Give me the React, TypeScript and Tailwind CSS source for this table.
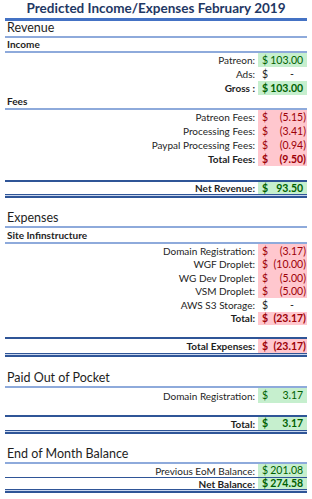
import React from 'react';

type Kind = 'pos' | 'neg' | 'none';

const font = { fontFamily: 'Lato, "Open Sans", Arial, sans-serif' };

function LightLine() {
  return <div className="h-[2px] bg-[#8eaadb]" />;
}

function DarkLine() {
  return <div className="h-[2px] bg-[#2f5597]" />;
}

function DoubleLine() {
  return <div className="h-[4px] border-t border-b-2 border-[#2f5597] bg-[#c9d6ee]" />;
}

function Heading({ text, h }: { text: string; h: string }) {
  return (
    <div className={`${h} flex items-end pl-[2px] text-[12.5px] leading-none text-[#1e1e1e] pb-[2px]`}>
      {text}
    </div>
  );
}

function SubHeading({ text, h }: { text: string; h: string }) {
  return (
    <div className={`${h} flex items-end pl-[2px] text-[10px] font-bold leading-none text-[#1e1e1e] pb-[2px]`}>
      {text}
    </div>
  );
}

function Row({
  label,
  value,
  kind,
  bold,
  h,
}: {
  label: string;
  value: string;
  kind: Kind;
  bold?: boolean;
  h: string;
}) {
  const cell =
    kind === 'pos'
      ? 'bg-[#c6efce] text-[#006100]'
      : kind === 'neg'
      ? 'bg-[#ffc7ce] text-[#9c0006]'
      : 'text-[#1e1e1e]';
  const neg = value.startsWith('(');
  return (
    <div className={`${h} flex text-[10px] leading-none ${bold ? 'font-bold' : ''}`}>
      <div className="flex-1 flex items-center justify-end pr-[3px] text-[#1e1e1e]">{label}</div>
      <div className={`w-[49px] flex items-center justify-between pl-[4px] pr-[1px] text-[10.5px] ${cell}`}>
        <span>$</span>
        {value === '-' ? (
          <span className="pr-[12px]">-</span>
        ) : (
          <span>
            {value}
            {!neg && <span className="invisible">)</span>}
          </span>
        )}
      </div>
    </div>
  );
}

export default function App() {
  return (
    <div className="w-[312px] h-[499px] bg-white overflow-hidden" style={font}>
      <div className="px-[5px]">
        <div className="h-[18px] flex items-center justify-center text-[13.5px] font-bold text-[#1f3864] leading-none">
          Predicted Income/Expenses February 2019
        </div>
        <div className="h-[3px] bg-[#4472c4]" />

        <Heading text="Revenue" h="h-[15px]" />
        <LightLine />
        <SubHeading text="Income" h="h-[13px]" />
        <LightLine />
        <Row label="Patreon:" value="103.00" kind="pos" h="h-[14px]" />
        <Row label="Ads:" value="-" kind="none" h="h-[14px]" />
        <Row label="Gross :" value="103.00" kind="pos" bold h="h-[14px]" />
        <SubHeading text="Fees" h="h-[13px]" />
        <LightLine />
        <Row label="Patreon Fees:" value="(5.15)" kind="neg" h="h-[14px]" />
        <Row label="Processing Fees:" value="(3.41)" kind="neg" h="h-[14px]" />
        <Row label="Paypal Processing Fees:" value="(0.94)" kind="neg" h="h-[14px]" />
        <Row label="Total Fees:" value="(9.50)" kind="neg" bold h="h-[14px]" />
        <div className="h-[14px]" />
        <DarkLine />
        <Row label="Net Revenue:" value="93.50" kind="pos" bold h="h-[12px]" />
        <DoubleLine />
        <div className="h-[12px]" />

        <Heading text="Expenses" h="h-[16px]" />
        <LightLine />
        <SubHeading text="Site Infinstructure" h="h-[14px]" />
        <LightLine />
        <Row label="Domain Registration:" value="(3.17)" kind="neg" h="h-[13.5px]" />
        <Row label="WGF Droplet:" value="(10.00)" kind="neg" h="h-[13.5px]" />
        <Row label="WG Dev Droplet:" value="(5.00)" kind="neg" h="h-[13.5px]" />
        <Row label="VSM Droplet:" value="(5.00)" kind="neg" h="h-[13.5px]" />
        <Row label="AWS S3 Storage:" value="-" kind="none" h="h-[13.5px]" />
        <Row label="Total:" value="(23.17)" kind="neg" bold h="h-[13.5px]" />
        <div className="h-[12px]" />
        <DarkLine />
        <Row label="Total Expenses:" value="(23.17)" kind="neg" bold h="h-[14px]" />
        <DoubleLine />
        <div className="h-[14px]" />

        <Heading text="Paid Out of Pocket" h="h-[15px]" />
        <LightLine />
        <Row label="Domain Registration:" value="3.17" kind="pos" h="h-[15px]" />
        <div className="h-[12px]" />
        <DarkLine />
        <Row label="Total:" value="3.17" kind="pos" bold h="h-[13px]" />
        <DoubleLine />
        <div className="h-[12px]" />

        <Heading text="End of Month Balance" h="h-[16px]" />
        <LightLine />
        <Row label="Previous EoM Balance:" value="201.08" kind="pos" h="h-[13px]" />
        <div className="h-[1px] bg-[#2f5597]" />
        <Row label="Net Balance:" value="274.58" kind="pos" bold h="h-[11px]" />
        <DoubleLine />
      </div>
    </div>
  );
}
